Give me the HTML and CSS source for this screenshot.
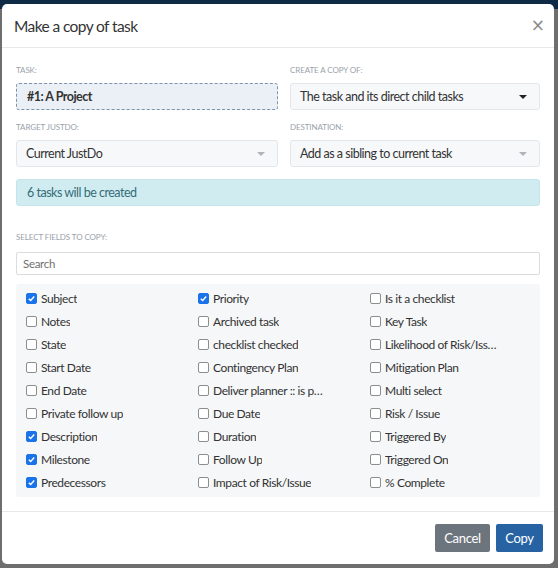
FILE: index.html
```html
<!DOCTYPE html>
<html>
<head>
<meta charset="utf-8">
<link rel="stylesheet" href="styles.css">
</head>
<body>
<div class="modal">
  <div class="modal-header">
    <div class="title">Make a copy of task</div>
    <div class="close">×</div>
  </div>
  <div class="modal-body">
    <div class="grid2">
      <div class="group">
        <div class="label">Task:</div>
        <div class="input task">#1: A Project</div>
      </div>
      <div class="group">
        <div class="label">Create a copy of:</div>
        <div class="input select"><span>The task and its direct child tasks</span><span class="caret dark"></span></div>
      </div>
      <div class="group">
        <div class="label">Target JustDo:</div>
        <div class="input select"><span>Current JustDo</span><span class="caret"></span></div>
      </div>
      <div class="group">
        <div class="label">Destination:</div>
        <div class="input select"><span>Add as a sibling to current task</span><span class="caret"></span></div>
      </div>
    </div>
    <div class="alert">6 tasks will be created</div>
    <div class="label fields-label">Select fields to copy:</div>
    <div class="search">Search</div>
    <div class="fields">
      <div class="field on"><span class="cb"></span><span class="txt">Subject</span></div>
      <div class="field on"><span class="cb"></span><span class="txt">Priority</span></div>
      <div class="field"><span class="cb"></span><span class="txt">Is it a checklist</span></div>
      <div class="field"><span class="cb"></span><span class="txt">Notes</span></div>
      <div class="field"><span class="cb"></span><span class="txt">Archived task</span></div>
      <div class="field"><span class="cb"></span><span class="txt">Key Task</span></div>
      <div class="field"><span class="cb"></span><span class="txt">State</span></div>
      <div class="field"><span class="cb"></span><span class="txt">checklist checked</span></div>
      <div class="field"><span class="cb"></span><span class="txt">Likelihood of Risk/Issue</span></div>
      <div class="field"><span class="cb"></span><span class="txt">Start Date</span></div>
      <div class="field"><span class="cb"></span><span class="txt">Contingency Plan</span></div>
      <div class="field"><span class="cb"></span><span class="txt">Mitigation Plan</span></div>
      <div class="field"><span class="cb"></span><span class="txt">End Date</span></div>
      <div class="field"><span class="cb"></span><span class="txt narrow">Deliver planner :: is projects</span></div>
      <div class="field"><span class="cb"></span><span class="txt">Multi select</span></div>
      <div class="field"><span class="cb"></span><span class="txt">Private follow up</span></div>
      <div class="field"><span class="cb"></span><span class="txt">Due Date</span></div>
      <div class="field"><span class="cb"></span><span class="txt">Risk / Issue</span></div>
      <div class="field on"><span class="cb"></span><span class="txt">Description</span></div>
      <div class="field"><span class="cb"></span><span class="txt">Duration</span></div>
      <div class="field"><span class="cb"></span><span class="txt">Triggered By</span></div>
      <div class="field on"><span class="cb"></span><span class="txt">Milestone</span></div>
      <div class="field"><span class="cb"></span><span class="txt">Follow Up</span></div>
      <div class="field"><span class="cb"></span><span class="txt">Triggered On</span></div>
      <div class="field on"><span class="cb"></span><span class="txt">Predecessors</span></div>
      <div class="field"><span class="cb"></span><span class="txt">Impact of Risk/Issue</span></div>
      <div class="field"><span class="cb"></span><span class="txt">% Complete</span></div>
    </div>
  </div>
  <div class="modal-footer">
    <div class="btn cancel">Cancel</div>
    <div class="btn copy">Copy</div>
  </div>
</div>
</body>
</html>
```

FILE: styles.css
```css
html, body {
  margin: 0;
  padding: 0;
}
body {
  width: 558px;
  height: 568px;
  overflow: hidden;
  background: linear-gradient(#0e2a45 0, #0e2a45 9px, #6e6e6e 9px, #6e6e6e 100%);
  font-family: Lato, "Open Sans", sans-serif;
  color: #333;
}
.modal {
  margin: 4px 0 0 2px;
  width: 552px;
  height: 560px;
  background: #fff;
  border-radius: 5px;
  display: flex;
  flex-direction: column;
}
.modal-header {
  height: 43px;
  border-bottom: 1px solid #e6e8eb;
  display: flex;
  align-items: center;
  justify-content: space-between;
  padding: 0 9px 0 12px;
}
.title {
  font-size: 15.5px;
  letter-spacing: -0.6px;
  color: #333;
  margin-top: 1px;
}
.close {
  font-size: 17px;
  color: #8a8a8a;
  margin-top: -1px;
  font-family: "DejaVu Sans", sans-serif;
}
.modal-body {
  padding: 17px 14px 0 14px;
  height: 446px;
  border-bottom: 1px solid #e6e8eb;
}
.grid2 {
  display: grid;
  grid-template-columns: 262px 250px;
  column-gap: 12px;
  row-gap: 12px;
}
.label {
  font-size: 8px;
  line-height: 10px;
  text-transform: uppercase;
  color: #9aa2ab;
  letter-spacing: -0.1px;
  margin-bottom: 8px;
}
.input {
  height: 27px;
  box-sizing: border-box;
  border: 1px solid #e3e6ea;
  background: #f7f8fa;
  border-radius: 3px;
  font-size: 12.5px;
  letter-spacing: -0.5px;
  display: flex;
  align-items: center;
  padding: 0 10px;
  color: #333;
}
.input.task {
  background: #eaf0f6;
  border: 1px dashed #7d92ab;
  font-weight: bold;
  font-size: 12.5px;
}
.select {
  justify-content: space-between;
  padding: 0 12px 0 9px;
}
.caret {
  width: 0;
  height: 0;
  border-left: 4px solid transparent;
  border-right: 4px solid transparent;
  border-top: 4px solid #b0b4b8;
}
.caret.dark {
  border-top-color: #222;
}
.alert {
  margin-top: 12px;
  height: 27px;
  box-sizing: border-box;
  background: #d1ecf1;
  border: 1px solid #c4e5eb;
  border-radius: 3px;
  color: #346d78;
  font-size: 12.5px;
  letter-spacing: -0.5px;
  display: flex;
  align-items: center;
  padding: 0 10px;
}
.fields-label {
  margin-top: 26px;
  margin-bottom: 10px;
}
.search {
  height: 23px;
  box-sizing: border-box;
  border: 1px solid #dcdcdc;
  border-radius: 2px;
  font-size: 11.5px;
  letter-spacing: -0.3px;
  color: #707070;
  display: flex;
  align-items: center;
  padding: 0 6px;
}
.fields {
  margin-top: 9px;
  background: #f6f7f9;
  border-radius: 3px;
  padding: 3px 10px;
  display: grid;
  grid-template-columns: repeat(3, 172px);
  grid-auto-rows: 23px;
}
.field {
  display: flex;
  align-items: center;
  font-size: 12px;
  letter-spacing: -0.4px;
  color: #333;
}
.cb {
  width: 9px;
  height: 9px;
  border: 1px solid #8d8d8d;
  border-radius: 2px;
  background: #fff;
  margin-right: 4px;
  flex: none;
}
.field.on .cb {
  border-color: #1a73e8;
  background: #1a73e8 url("data:image/svg+xml;utf8,<svg xmlns='http://www.w3.org/2000/svg' viewBox='0 0 10 10'><path d='M2 5.2 L4.1 7.2 L8 2.8' fill='none' stroke='white' stroke-width='1.6'/></svg>") center/100% no-repeat;
}
.txt {
  max-width: 114px;
  white-space: nowrap;
  overflow: hidden;
  text-overflow: ellipsis;
}
.txt.narrow {
  max-width: 110px;
}
.modal-footer {
  flex: 1;
  display: flex;
  justify-content: flex-end;
  align-items: flex-start;
  padding: 12px 11px 0 0;
  gap: 6px;
}
.btn {
  height: 28px;
  display: flex;
  align-items: center;
  justify-content: center;
  color: #fff;
  font-size: 13px;
  letter-spacing: -0.3px;
  border-radius: 2px;
}
.cancel {
  width: 55px;
  background: #6c757d;
}
.copy {
  width: 47px;
  background: #2763a3;
}
```
